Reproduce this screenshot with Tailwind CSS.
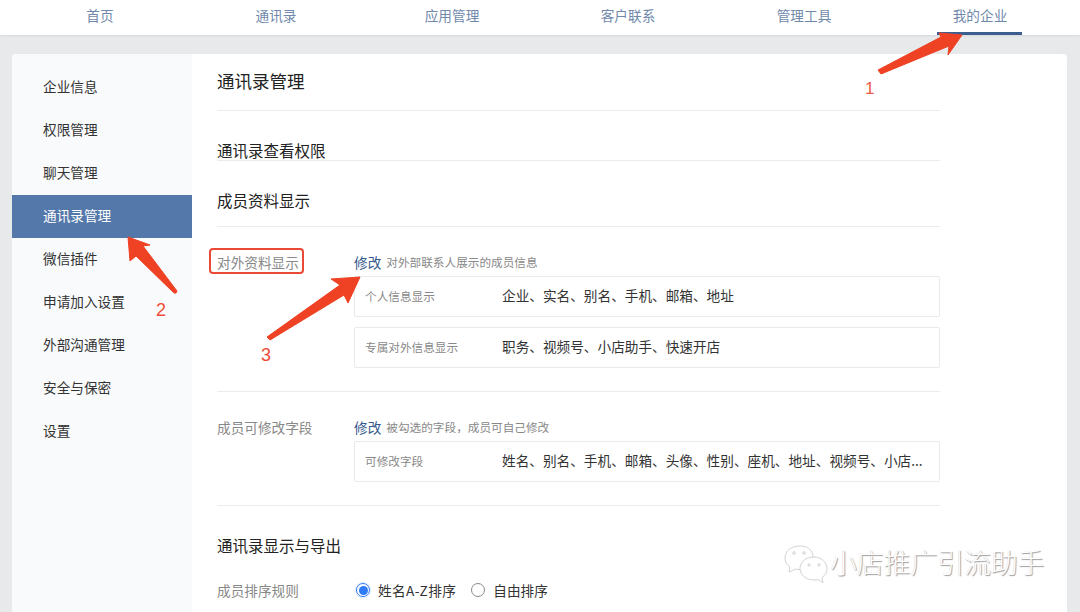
<!DOCTYPE html>
<html lang="zh">
<head>
<meta charset="utf-8">
<script src="https://cdn.jsdelivr.net/npm/@tailwindcss/browser@4"></script>
</head>
<body class="relative h-[612px] w-[1080px] overflow-hidden bg-[#e8e9eb] font-['Noto_Sans_CJK_SC','Liberation_Sans',sans-serif] text-[13.65px] text-[#333]">
<nav class="flex h-[35px] bg-white px-3 text-[#7089ab] shadow-[0_1px_2px_rgba(0,0,0,0.08)]">
  <a class="flex h-full w-[176px] items-center justify-center pb-[5px]">首页</a>
  <a class="flex h-full w-[176px] items-center justify-center pb-[5px]">通讯录</a>
  <a class="flex h-full w-[176px] items-center justify-center pb-[5px]">应用管理</a>
  <a class="flex h-full w-[176px] items-center justify-center pb-[5px]">客户联系</a>
  <a class="flex h-full w-[176px] items-center justify-center pb-[5px]">管理工具</a>
  <a class="relative flex h-full w-[176px] items-center justify-center pb-[5px]">我的企业<span class="absolute bottom-0 left-[45px] h-[3px] w-[85px] bg-[#3d5f8f]"></span></a>
</nav>
<main class="mt-[19px] ml-3 flex h-[558px] w-[1055px] overflow-hidden rounded-t-[4px] bg-white">
  <aside class="w-[180px] shrink-0 bg-[#f9fafc] pt-3">
    <ul class="text-[#333]">
      <li class="flex h-[43px] items-center pb-[2px] pl-[31px]">企业信息</li>
      <li class="flex h-[43px] items-center pb-[2px] pl-[31px]">权限管理</li>
      <li class="flex h-[43px] items-center pb-[2px] pl-[31px]">聊天管理</li>
      <li class="flex h-[43px] items-center bg-[#5478aa] pb-[2px] pl-[31px] text-white">通讯录管理</li>
      <li class="flex h-[43px] items-center pb-[2px] pl-[31px]">微信插件</li>
      <li class="flex h-[43px] items-center pb-[2px] pl-[31px]">申请加入设置</li>
      <li class="flex h-[43px] items-center pb-[2px] pl-[31px]">外部沟通管理</li>
      <li class="flex h-[43px] items-center pb-[2px] pl-[31px]">安全与保密</li>
      <li class="flex h-[43px] items-center pb-[2px] pl-[31px]">设置</li>
    </ul>
  </aside>
  <section class="ml-[25px] w-[723px]">
    <h1 class="flex h-[57px] items-center border-b border-[#e9ebee] pb-[3px] text-[17.5px] leading-none text-[#222]">通讯录管理</h1>
    <h2 class="flex h-[50px] items-end border-b border-[#e9ebee] text-[15.5px] leading-[20px] text-[#222]">通讯录查看权限</h2>
    <h2 class="flex h-[66px] items-center border-b border-[#e9ebee] pt-[14px] text-[15.5px] text-[#222]">成员资料显示</h2>
    <div class="flex border-b border-[#e9ebee] pt-[26px] pb-[23px]">
      <div class="w-[137px] shrink-0 text-[#888] leading-[18px]">对外资料显示</div>
      <div class="flex-1">
        <p class="flex h-[18px] items-center leading-[18px]"><a class="text-[#36598b]">修改</a><span class="ml-[5px] text-[11.65px] text-[#888]">对外部联系人展示的成员信息</span></p>
        <div class="mt-[5px] flex h-[41px] items-center rounded-[2px] border border-[#e8eaed] pb-[2px]">
          <span class="ml-[10px] w-[137px] shrink-0 text-[11.65px] text-[#888]">个人信息显示</span>
          <span class="text-[#333]">企业、实名、别名、手机、邮箱、地址</span>
        </div>
        <div class="mt-[10px] flex h-[41px] items-center rounded-[2px] border border-[#e8eaed] pb-[2px]">
          <span class="ml-[10px] w-[137px] shrink-0 text-[11.65px] text-[#888]">专属对外信息显示</span>
          <span class="text-[#333]">职务、视频号、小店助手、快速开店</span>
        </div>
      </div>
    </div>
    <div class="flex border-b border-[#e9ebee] pt-[26px] pb-[23px]">
      <div class="w-[137px] shrink-0 text-[#888] leading-[18px]">成员可修改字段</div>
      <div class="flex-1">
        <p class="flex h-[18px] items-center leading-[18px]"><a class="text-[#36598b]">修改</a><span class="ml-[5px] text-[11.65px] text-[#888]">被勾选的字段，成员可自己修改</span></p>
        <div class="mt-[5px] flex h-[41px] items-center rounded-[2px] border border-[#e8eaed] pb-[2px]">
          <span class="ml-[10px] w-[137px] shrink-0 text-[11.65px] text-[#888]">可修改字段</span>
          <span class="whitespace-nowrap text-[#333]">姓名、别名、手机、邮箱、头像、性别、座机、地址、视频号、小店...</span>
        </div>
      </div>
    </div>
    <h2 class="mt-[30px] h-[18px] text-[15.5px] leading-[18px] text-[#222]">通讯录显示与导出</h2>
    <div class="mt-[27px] flex items-center">
      <div class="w-[137px] shrink-0 leading-[18px] text-[#888]">成员排序规则</div>
      <label class="ml-[2px] flex items-center">
        <span class="flex size-[14px] items-center justify-center rounded-full border border-[#2f7bf6] shadow-[0_0_0_1px_rgba(47,123,246,0.15)]"><span class="size-[9px] rounded-full bg-[#2f7bf6]"></span></span>
        <span class="ml-[8px] leading-[18px] tracking-[0.4px]">姓名A-Z排序</span>
      </label>
      <label class="ml-[15px] flex items-center">
        <span class="size-[14px] rounded-full border border-[#8a8a8a]"></span>
        <span class="ml-[8px] leading-[18px]">自由排序</span>
      </label>
    </div>
  </section>
</main>

<div class="absolute top-[248px] left-[209px] h-[26px] w-[95px] rounded-[4px] border-2 border-[#ea4a35]"></div>

<svg class="absolute top-0 left-0" width="1080" height="612" viewBox="0 0 1080 612" fill="#ef4123" stroke="#ef4123" stroke-width="1" stroke-linejoin="round">
  <polygon points="878,70 941,37 939,33 962,35 948,55 949,46 881,74"/>
  <polygon points="128,237 150,245 143,246 177,291 176,293 174,293 136,256 130,261"/>
  <polygon points="360,277 331,279 340,285 267,337 270,340 344,295 348,303"/>
</svg>
<span class="absolute top-[80px] left-[865px] font-['Liberation_Sans',sans-serif] text-[17px] leading-[18px] text-[#ee5a45]">1</span>
<span class="absolute top-[300px] left-[156px] font-['Liberation_Sans',sans-serif] text-[18px] leading-[20px] text-[#ee4c36]">2</span>
<span class="absolute top-[345px] left-[261px] font-['Liberation_Sans',sans-serif] text-[18px] leading-[20px] text-[#ee4c36]">3</span>

<div class="absolute top-[544px] left-[783px] flex items-center">
  <svg width="46" height="42" viewBox="0 0 46 42" fill="#fff" stroke="#c8c8c8" stroke-width="0.8">
    <path d="M17 2C8 2 2 7 2 14c0 4 2 7 5 9l-1 5 7-3c2 .5 3 .5 5 .5 6 0 12-5 12-12C30 6 25 2 17 2z"/>
    <path d="M31 13c-8 0-14 5-14 11.500S23 36 31 36c1.500 0 3-.2 4-.5l5 3-1-5c3-2 5-5 5-8.500C44 18 38 13 31 13z"/>
    <circle cx="11" cy="9" r="1.300"/><circle cx="21" cy="9" r="1.300"/>
    <circle cx="26" cy="21" r="1.200"/><circle cx="36" cy="21" r="1.200"/>
  </svg>
  <span class="mb-[5px] ml-[1px] text-[26.8px] leading-none font-light text-white [text-shadow:1px_1px_1px_rgba(0,0,0,0.4),-0.5px_-0.5px_0.5px_rgba(0,0,0,0.15)]">小店推广引流助手</span>
</div>
</body>
</html>
